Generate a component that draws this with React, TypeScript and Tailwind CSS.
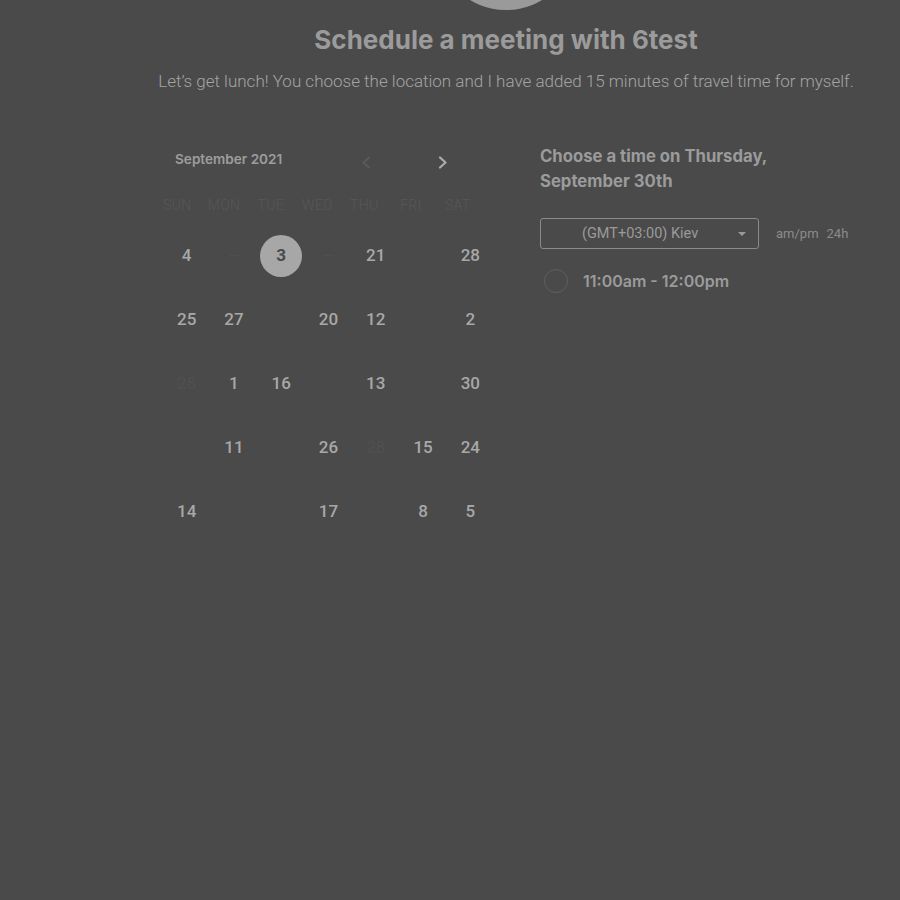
const weekdays = ["Sun", "Mon", "Tue", "Wed", "Thu", "Fri", "Sat"];

type Cell = { n?: string; kind?: "on" | "off" | "sel" };

const rows: Cell[][] = [
    [{ n: "4", kind: "on" }, { n: "--", kind: "off" }, { n: "3", kind: "sel" }, { n: "--", kind: "off" }, { n: "21", kind: "on" }, {}, { n: "28", kind: "on" }],
    [{ n: "25", kind: "on" }, { n: "27", kind: "on" }, {}, { n: "20", kind: "on" }, { n: "12", kind: "on" }, {}, { n: "2", kind: "on" }],
    [{ n: "28", kind: "off" }, { n: "1", kind: "on" }, { n: "16", kind: "on" }, {}, { n: "13", kind: "on" }, {}, { n: "30", kind: "on" }],
    [{}, { n: "11", kind: "on" }, {}, { n: "26", kind: "on" }, { n: "28", kind: "off" }, { n: "15", kind: "on" }, { n: "24", kind: "on" }],
    [{ n: "14", kind: "on" }, {}, {}, { n: "17", kind: "on" }, {}, { n: "8", kind: "on" }, { n: "5", kind: "on" }],
];

function Chevron({ color, left }: { color: string; left?: boolean }) {
    return (
        <svg width="10" height="13" viewBox="0 0 10 13" fill="none">
            <polyline
                points={left ? "8,1.5 2.5,6.5 8,11.5" : "2,1.5 7.5,6.5 2,11.5"}
                stroke={color}
                strokeWidth="2.2"
                strokeLinecap="round"
                strokeLinejoin="round"
            />
        </svg>
    );
}

export default function App() {
    return (
        <div className="w-full h-[900px] bg-[#4a4a4a] overflow-hidden" style={{ fontFamily: "Inter, 'Noto Sans', sans-serif" }}>
            <div className="ml-[156px] w-[700px] flex flex-col items-center">
                {/* avatar, mostly cut off at top */}
                <div className="h-[10px] w-[140px] overflow-hidden flex items-end">
                    <div className="w-[140px] h-[140px] shrink-0 rounded-full bg-[#9a9a9a]"></div>
                </div>
                <h1 className="mt-[14px] text-[26px] leading-[32px] font-bold text-[#9b9b9b]">Schedule a meeting with 6test</h1>
                <p className="mt-[12px] text-[17px] leading-[26px] font-light text-[#a4a4a4]" style={{ fontFamily: "Roboto, sans-serif" }}>
                    Let’s get lunch! You choose the location and I have added 15 minutes of travel time for myself.
                </p>

                <div className="mt-[48px] w-full flex">
                    {/* calendar */}
                    <div className="w-[384px] flex flex-col">
                        <div className="h-[34px] flex items-center pl-[19px]">
                            <span className="w-[183px] text-[13.6px] font-semibold text-[#9d9d9d]">September 2021</span>
                            <span className="w-[16px] flex justify-center pt-[6px]"><Chevron color="#595959" left /></span>
                            <span className="ml-[61px] w-[16px] flex justify-center pt-[6px]"><Chevron color="#acacac" /></span>
                        </div>
                        <div className="mt-[19px] ml-[-2px] w-[327px] h-[20px] grid grid-cols-7 items-center">
                            {weekdays.map((d) => (
                                <span key={d} className="text-center uppercase text-[14px] tracking-wide font-light text-[#575757]" style={{ fontFamily: "Roboto, sans-serif" }}>
                                    {d}
                                </span>
                            ))}
                        </div>
                        <div className="mt-[9px] ml-[7px] w-[331px] flex flex-col" style={{ fontFamily: "Roboto, sans-serif" }}>
                            {rows.map((r, i) => (
                                <div key={i} className="h-[64px] grid grid-cols-7 items-center">
                                    {r.map((c, j) => (
                                        <div key={j} className="flex justify-center items-center">
                                            {c.kind === "sel" ? (
                                                <span className="w-[42px] h-[42px] rounded-full bg-[#a7a7a7] flex items-center justify-center text-[17px] font-bold text-[#4a4a4a]">
                                                    {c.n}
                                                </span>
                                            ) : c.kind === "off" ? (
                                                <span className="text-[17px] text-[#505050]">{c.n}</span>
                                            ) : (
                                                <span className="text-[17px] font-medium text-[#a8a8a8]">{c.n}</span>
                                            )}
                                        </div>
                                    ))}
                                </div>
                            ))}
                        </div>
                    </div>

                    {/* time slots */}
                    <div className="w-[316px] pt-[2px] flex flex-col">
                        <h2 className="w-[260px] text-[16.7px] leading-[25px] font-bold text-[#9b9b9b]">Choose a time on Thursday, September 30th</h2>
                        <div className="mt-[24px] flex items-center">
                            <div className="w-[219px] h-[31px] border border-[#8a8a8a] rounded-[3px] flex items-center pl-[41px] pr-[12px]" style={{ fontFamily: "Roboto, sans-serif" }}>
                                <span className="text-[14.5px] text-[#9a9a9a]">(GMT+03:00) Kiev</span>
                                <span className="ml-auto w-0 h-0 border-l-[4px] border-r-[4px] border-t-[4px] border-l-transparent border-r-transparent border-t-[#9a9a9a]"></span>
                            </div>
                            <span className="ml-[17px] text-[13px] text-[#8c8c8c]" style={{ fontFamily: "Roboto, sans-serif" }}>am/pm</span>
                            <span className="ml-[8px] text-[13px] text-[#8c8c8c]" style={{ fontFamily: "Roboto, sans-serif" }}>24h</span>
                        </div>
                        <div className="mt-[20px] h-[24px] flex items-center">
                            <span className="ml-[4px] w-[24px] h-[24px] rounded-full border-[1.5px] border-[#606060]"></span>
                            <span className="ml-[15px] text-[16px] font-semibold text-[#9b9b9b]">11:00am - 12:00pm</span>
                        </div>
                    </div>
                </div>
            </div>
        </div>
    );
}
